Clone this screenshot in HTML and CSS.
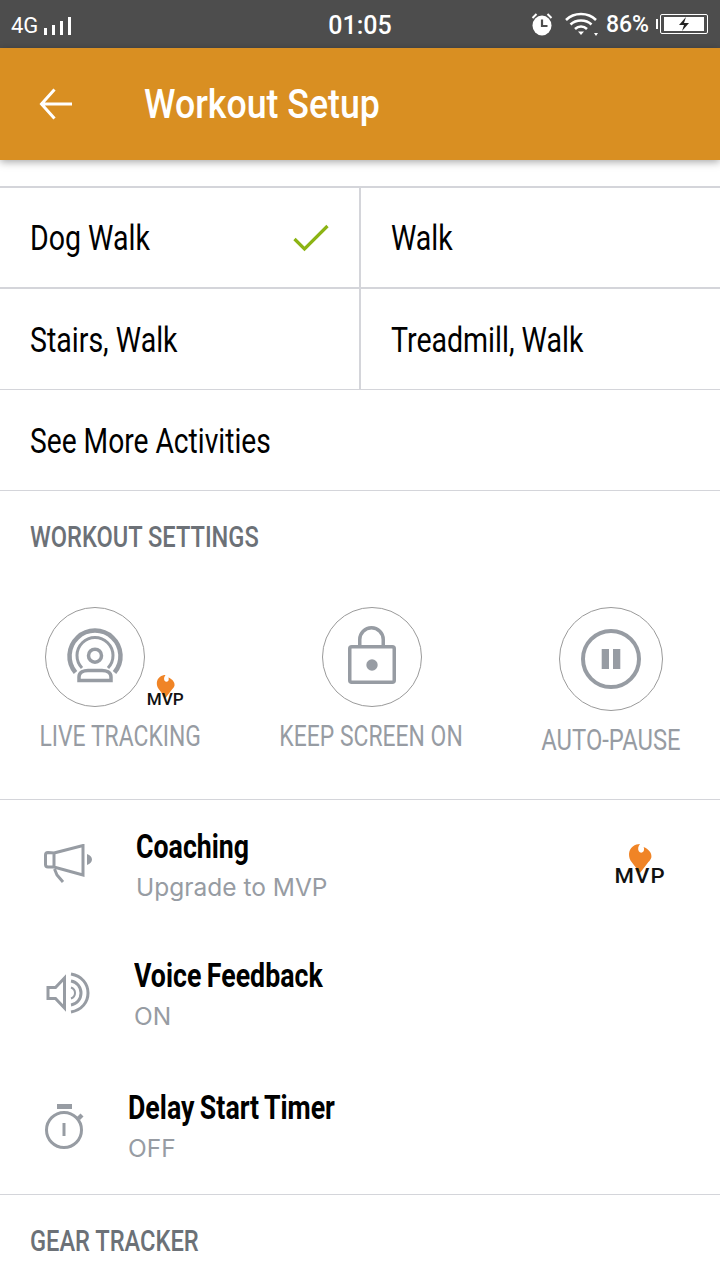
FILE: index.html
```html
<!DOCTYPE html>
<html lang="en">
<head>
<meta charset="utf-8">
<title>Workout Setup</title>
<link rel="stylesheet" href="styles.css">
</head>
<body>
<div class="status">
  <div class="st-left"><span class="st-net">4G</span>
    <svg class="st-bars" width="29" height="18" viewBox="0 0 29 18"><path d="M1 11h3v7H1zM9 8h3v10H9zM17 4h3v14h-3zM25 0h3v18h-3z" fill="#fff"/></svg>
  </div>
  <div class="st-time">01:05</div>
  <div class="st-right">
    <svg width="24" height="24" viewBox="0 0 24 24"><path d="M2.500 6l4-4M21.500 6l-4-4" stroke="#fff" stroke-width="2" fill="none"/><ellipse cx="12" cy="13.500" rx="9.500" ry="10" fill="#fff"/><path d="M12 7.500v6.500h5.500" stroke="#4d4d4d" stroke-width="2.200" fill="none"/></svg>
    <svg class="st-wifi" width="36" height="26" viewBox="0 0 36 26"><path d="M3 9C11 1 25 1 33 9M7.500 13.500C13 8 23 8 28.500 13.500M12 18c3.500-3.500 8.500-3.500 12 0" stroke="#fff" stroke-width="2.500" fill="none"/><path d="M15 20.500h6L18 24zM31 22h4l-2 3z" fill="#fff"/></svg>
    <span class="st-pct">86%</span>
    <div class="batt-tab"></div>
    <div class="battery"><svg width="40" height="14" viewBox="0 0 40 14"><path d="M0 0h40v14H0z" fill="#fff"/><path d="M22 0l-7 8h5l-2 6 7-8h-5l2-6z" fill="#222"/></svg></div>
  </div>
</div>
<header class="appbar">
  <svg class="back" width="36" height="32" viewBox="0 0 36 32"><path d="M2 16h31M15.500 1.500L2.500 16l13 14.500" stroke="#fff" stroke-width="3" fill="none"/></svg>
  <h1 class="title"><span class="narrow">Workout Setup</span></h1>
</header>

<section class="activities">
  <div class="act-row">
    <div class="cell cell-l"><span class="t-act">Dog Walk</span>
      <svg class="check" width="36" height="28" viewBox="0 0 36 28"><path d="M1.500 15l10 10L34.500 2" stroke="#8cb414" stroke-width="3.200" fill="none"/></svg>
    </div>
    <div class="cell cell-r"><span class="t-act">Walk</span></div>
  </div>
  <div class="act-row">
    <div class="cell cell-l"><span class="t-act">Stairs, Walk</span></div>
    <div class="cell cell-r"><span class="t-act">Treadmill, Walk</span></div>
  </div>
  <div class="act-more"><span class="t-act">See More Activities</span></div>
</section>

<h2 class="section-head"><span class="narrow">WORKOUT SETTINGS</span></h2>
<section class="toggles">
  <div class="toggle toggle-live">
    <div class="circle">
      <svg width="62" height="62" viewBox="0 0 62 62" fill="none" stroke="#979ca3">
        <path d="M11.500 46.500A25.500 25.500 0 1 1 50.500 46.500" stroke-width="4.500"/>
        <path d="M18 42A18 18 0 1 1 44 42" stroke-width="3"/>
        <circle cx="31" cy="29.700" r="6.500" stroke-width="3.500"/>
        <path d="M15 54.500V51C15 46 20 44.500 24 44.500H38C42 44.500 47 46 47 51V54.500z" stroke-width="3.500" fill="#fff"/>
      </svg>
    </div>
    <div class="mvp mvp-small"><svg class="flame" viewBox="0 0 20 24"><path d="M10 24L3 15C0 11 0 5 4 2C6 .7 8 0 10 0C8.500 2 8 4 9 6C10 7.500 12 7.500 13 6C13.500 5 13.500 3.500 13 2.500C17 4 20 7.500 19.500 11C19 13 18 14 17 15z" fill="#f08426"/></svg><span class="mvp-t">MVP</span></div>
    <div class="t-tog">LIVE TRACKING</div>
  </div>
  <div class="toggle toggle-screen">
    <div class="circle">
      <svg width="50" height="62" viewBox="0 0 50 62" fill="none" stroke="#979ca3" stroke-width="3.500">
        <path d="M12.750 21V13.500a11.750 11.750 0 0 1 23.500 0V21"/>
        <rect x="2.750" y="20.750" width="44.500" height="35.500" rx="2"/>
        <circle cx="25" cy="39" r="5.700" fill="#979ca3" stroke="none"/>
      </svg>
    </div>
    <div class="t-tog">KEEP SCREEN ON</div>
  </div>
  <div class="toggle toggle-pause">
    <div class="circle circle-lg">
      <svg width="60" height="60" viewBox="0 0 60 60" fill="none"><circle cx="30" cy="30" r="28" stroke="#979ca3" stroke-width="4"/><path d="M20.700 20H28V40H20.700zM32 20H39.300V40H32z" fill="#979ca3"/></svg>
    </div>
    <div class="t-tog t-pause">AUTO-PAUSE</div>
  </div>
</section>

<section class="rows">
  <div class="row row-coach">
    <svg class="ico" width="50" height="42" viewBox="0 0 50 42" fill="none" stroke="#979ca3" stroke-width="3"><path d="M10 9L39 1.500V31L10 23H4c-1.500 0-2.500-1-2.500-2.500V11c0-1.500 1-2.500 2.500-2.500zM10 9v14M10.500 25l2.500 6 6 7"/><path d="M43 10c3 1 5 3 5 5.500S46 20 43 21z" fill="#979ca3" stroke="none"/></svg>
    <div class="row-text"><div class="t-row">Coaching</div><div class="t-sub">Upgrade to MVP</div></div>
    <div class="mvp mvp-large"><svg class="flame" viewBox="0 0 20 24"><path d="M10 24L3 15C0 11 0 5 4 2C6 .7 8 0 10 0C8.500 2 8 4 9 6C10 7.500 12 7.500 13 6C13.500 5 13.500 3.500 13 2.500C17 4 20 7.500 19.500 11C19 13 18 14 17 15z" fill="#f08426"/></svg><span class="mvp-t">MVP</span></div>
  </div>
  <div class="row row-voice">
    <svg class="ico" width="46" height="42" viewBox="0 0 46 42" fill="none" stroke="#979ca3" stroke-width="3"><path d="M3 15.500h7.500L19.500 6v30l-9-9.500H3z"/><path d="M26 15.500c3 1 4 3 4 5.500s-1 4.500-4 5.500" stroke-width="2"/><path d="M26 9c6 1 10 6 10 12s-4 11-10 12"/><path d="M26 2c11 2 17 10 17 19s-6 17-17 19"/></svg>
    <div class="row-text"><div class="t-row">Voice Feedback</div><div class="t-sub">ON</div></div>
  </div>
  <div class="row row-delay">
    <svg class="ico" width="42" height="48" viewBox="0 0 42 48" fill="none" stroke="#979ca3" stroke-width="3"><circle cx="20" cy="28" r="17.500"/><path d="M13 2h15v5H13z" fill="#979ca3" stroke="none"/><path d="M20 21v13"/><path d="M33 15l3.500-3.500 3 3-3.500 3.500z" fill="#979ca3" stroke="none"/></svg>
    <div class="row-text"><div class="t-row">Delay Start Timer</div><div class="t-sub">OFF</div></div>
  </div>
</section>

<h2 class="section-head section-gear"><span class="narrow">GEAR TRACKER</span></h2>
</body>
</html>
```

FILE: styles.css
```css
* { box-sizing: border-box; }
html, body { margin: 0; padding: 0; }
body { width: 720px; height: 1280px; overflow: hidden; background: #fff; font-family: "Roboto", sans-serif; color: #000; }

.status { height: 48px; background: #4d4d4d; color: #fff; display: grid; grid-template-columns: 1fr auto 1fr; align-items: center; }
.st-left { display: flex; align-items: center; padding-left: 11px; gap: 5px; }
.st-net { font-size: 22px; padding-top: 3px; }
.st-bars { margin-top: 3px; }
.st-time { font-size: 25px; font-weight: 500; padding-top: 2px; }
.st-right { display: flex; align-items: center; justify-content: flex-end; padding-right: 12px; }
.st-wifi { margin-left: 9px; }
.st-pct { font-size: 23px; font-weight: 500; margin-left: 7px; }
.batt-tab { width: 2px; height: 10px; background: #fff; margin-left: 7px; }
.battery { width: 48px; height: 20px; border: 1.500px solid #fff; border-radius: 2px; margin-left: 2px; padding: 1.500px 2px 1.500px 3px; display: flex; }

.appbar { height: 112px; background: #d98f22; display: flex; align-items: center; padding-left: 39px; box-shadow: 0 2px 8px rgba(0,0,0,.35); position: relative; }
.back { margin-right: 69px; }
.title { margin: 0; padding-top: 2px; color: #fff; font-size: 40px; font-weight: 500; line-height: 1; }
.narrow { display: inline-block; white-space: nowrap; transform: scaleX(.893); transform-origin: left center; }

.activities { margin-top: 26px; border-top: 2px solid #d4d5da; }
.act-row { display: flex; height: 101px; border-bottom: 2px solid #d4d5da; }
.act-row + .act-row { border-bottom-width: 1px; }
.cell { display: flex; align-items: center; justify-content: space-between; }
.cell-l { width: 361px; padding: 0 30px; border-right: 2px solid #d4d5da; }
.cell-r { flex: 1; padding-left: 30px; }
.t-act { display: inline-block; white-space: nowrap; font-size: 35px; line-height: 1; padding-top: 2px; transform: scaleX(.815); transform-origin: left center; }
.act-more { height: 101px; display: flex; align-items: center; padding-left: 30px; border-bottom: 1px solid #d4d5da; }
.act-more .t-act { transform: scaleX(.805); }

.section-head { margin: 0; padding: 31px 0 0 30px; font-size: 29px; line-height: 30px; font-weight: 500; color: #6c7177; }
.section-head .narrow { transform: scaleX(.815); }

.toggles { display: grid; grid-template-columns: 240px 262px 218px; height: 248px; padding-top: 55px; border-bottom: 1px solid #d4d5da; }
.toggle { display: flex; flex-direction: column; align-items: center; position: relative; }
.circle { width: 100px; height: 100px; border: 1px solid #9a9a9a; border-radius: 50%; display: flex; align-items: center; justify-content: center; }
.circle-lg { width: 104px; height: 104px; }
.toggle-live .circle { margin-right: 50px; }
.toggle-screen .circle { margin-left: 2px; }
.t-tog { font-size: 29px; line-height: 32px; color: #979ca3; margin-top: 13px; white-space: nowrap; transform: scaleX(.79); }
.t-pause { transform: scaleX(.82); }
.mvp { position: absolute; display: flex; flex-direction: column; align-items: center; }
.mvp-t { font-family: "Roboto", sans-serif; font-weight: 500; color: #111; line-height: 1; }
.mvp-small { left: 148px; top: 68px; }
.mvp-small .flame { width: 19px; height: 23px; }
.mvp-small .mvp-t { font-size: 16px; margin-top: -6px; transform: scaleX(1.07); }
.mvp-large { right: 57px; top: 844px; }
.mvp-large .flame { width: 24px; height: 29px; }
.mvp-large .mvp-t { font-size: 20px; margin-top: -7px; letter-spacing: 1px; transform: scaleX(1.11); }

.rows { height: 395px; padding-top: 1px; border-bottom: 1px solid #d4d5da; }
.row { display: flex; align-items: flex-start; }
.row-coach { padding: 28px 0 0 44px; height: 129px; }
.row-voice { padding: 28px 0 0 45px; height: 133px; }
.row-delay { padding: 27px 0 0 44px; }
.row-coach .ico { margin: 15px 42px 0 0; }
.row-voice .ico { margin: 14px 43px 0 0; }
.row-delay .ico { margin: 12px 42px 0 0; }
.t-row { font-size: 33px; line-height: 36px; font-weight: 700; color: #000; white-space: nowrap; transform: scaleX(.81); transform-origin: left center; word-spacing: -1.500px; }
.t-sub { font-family: "Inter", "Roboto", sans-serif; font-size: 24.500px; line-height: 34px; margin-top: 5px; color: #979ca3; }
.section-gear { padding-top: 31px; }
```
